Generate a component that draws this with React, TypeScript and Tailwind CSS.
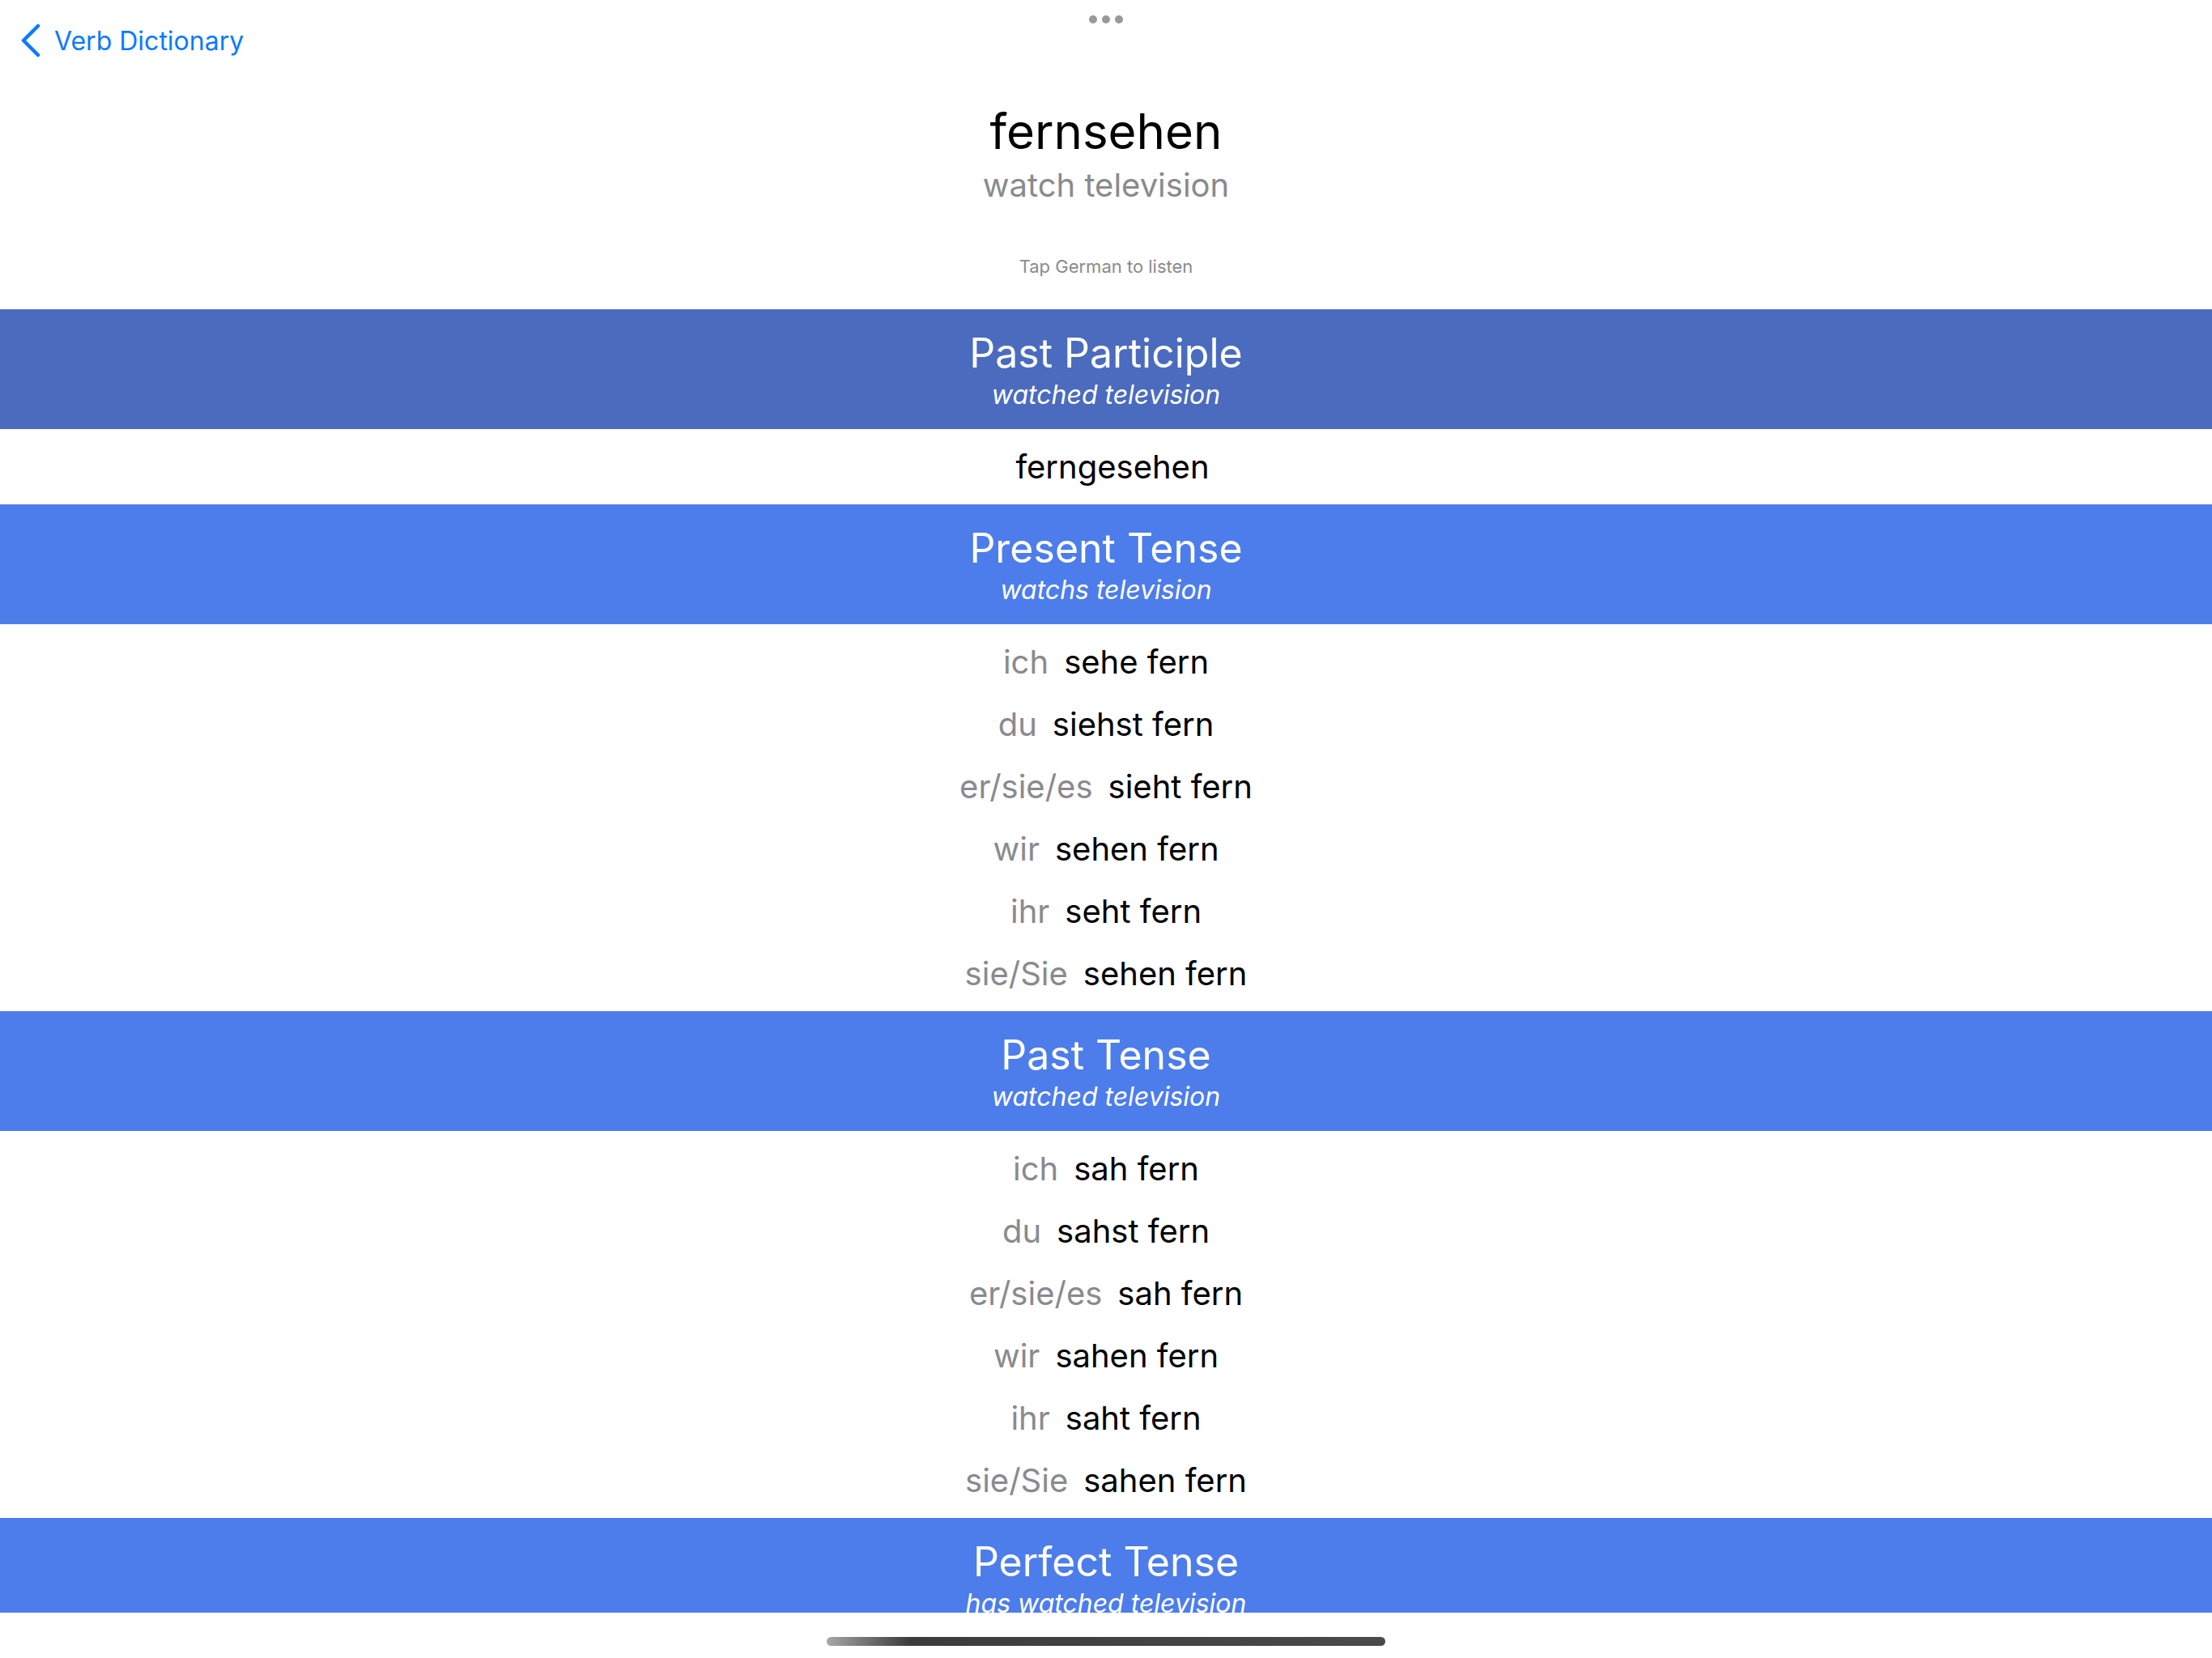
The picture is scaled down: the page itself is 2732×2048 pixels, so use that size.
import React from "react";

type Row = { pronoun?: string; form: string };
type Section = { title: string; subtitle: string; tone: string; rows: Row[] };

const sections: Section[] = [
  {
    title: "Past Participle",
    subtitle: "watched television",
    tone: "bg-[#4a6bbe]",
    rows: [{ form: "ferngesehen" }],
  },
  {
    title: "Present Tense",
    subtitle: "watchs television",
    tone: "bg-[#4d7deb]",
    rows: [
      { pronoun: "ich", form: "sehe fern" },
      { pronoun: "du", form: "siehst fern" },
      { pronoun: "er/sie/es", form: "sieht fern" },
      { pronoun: "wir", form: "sehen fern" },
      { pronoun: "ihr", form: "seht fern" },
      { pronoun: "sie/Sie", form: "sehen fern" },
    ],
  },
  {
    title: "Past Tense",
    subtitle: "watched television",
    tone: "bg-[#4d7deb]",
    rows: [
      { pronoun: "ich", form: "sah fern" },
      { pronoun: "du", form: "sahst fern" },
      { pronoun: "er/sie/es", form: "sah fern" },
      { pronoun: "wir", form: "sahen fern" },
      { pronoun: "ihr", form: "saht fern" },
      { pronoun: "sie/Sie", form: "sahen fern" },
    ],
  },
  {
    title: "Perfect Tense",
    subtitle: "has watched television",
    tone: "bg-[#4d7deb]",
    rows: [
      { pronoun: "ich", form: "habe ferngesehen" },
      { pronoun: "du", form: "hast ferngesehen" },
    ],
  },
];

function SectionBlock({ section }: { section: Section }) {
  return (
    <div>
      <div className={`${section.tone} h-[148px] flex flex-col items-center pt-[23px] text-white`}>
        <div className="text-[50px] leading-[62px]">{section.title}</div>
        <div className="text-[32px] leading-[41px] italic">{section.subtitle}</div>
      </div>
      <div className="py-[8px]">
        {section.rows.map((row) => (
          <div
            key={row.form + (row.pronoun ?? "")}
            className={`h-[77px] flex items-center justify-center gap-[19px] text-[40px] leading-[51px] ${row.pronoun ? "" : "pl-[16px]"}`}
          >
            {row.pronoun && <span className="text-[#8a8a8e]">{row.pronoun}</span>}
            <span className="text-black">{row.form}</span>
          </div>
        ))}
      </div>
    </div>
  );
}

export default function App() {
  return (
    <div className="w-[2732px] h-[2048px] bg-white overflow-hidden relative font-['Inter','Noto_Sans',sans-serif]">
      {/* multitasking dots */}
      <div className="absolute top-[19px] left-1/2 -translate-x-1/2 flex gap-[6px] z-10">
        <span className="w-[10px] h-[10px] rounded-full bg-[#999999]" />
        <span className="w-[10px] h-[10px] rounded-full bg-[#999999]" />
        <span className="w-[10px] h-[10px] rounded-full bg-[#999999]" />
      </div>

      <div className="h-[1992px] overflow-hidden">
        <div className="h-[100px] flex items-center pl-[25px]">
          <svg width="26" height="42" viewBox="0 0 26 42" fill="none">
            <path d="M22 3 L4 21 L22 39" stroke="#0a7aff" strokeWidth="4.5" strokeLinecap="round" strokeLinejoin="round" />
          </svg>
          <span className="ml-[16px] text-[32px] leading-[41px] text-[#0a7aff]">Verb Dictionary</span>
        </div>

        <div className="flex flex-col items-center pb-[39px]">
          <div className="mt-[25px] text-[60px] leading-[75px] text-black">fernsehen</div>
          <div className="mt-[3px] text-[40px] leading-[51px] text-[#8a8a8e]">watch television</div>
          <div className="mt-[62px] text-[22px] leading-[27px] text-[#8a8a8e]">Tap German to listen</div>
        </div>

        {sections.map((s) => (
          <SectionBlock key={s.title} section={s} />
        ))}
      </div>

      <div className="flex justify-center pt-[30px]">
        <div className="w-[690px] h-[11px] rounded-full bg-gradient-to-r from-[#a8a8a8] via-[#3c3c3c] via-15% to-[#4a4a4a]" />
      </div>
    </div>
  );
}
